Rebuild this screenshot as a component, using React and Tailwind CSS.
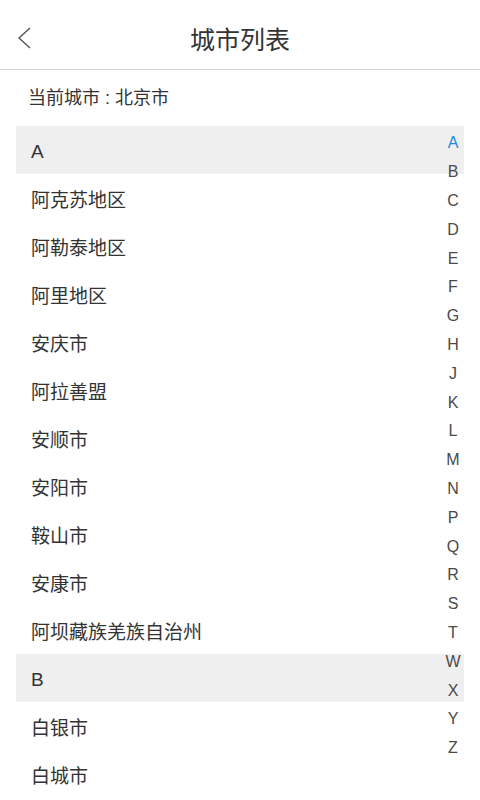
import React from "react";

const sections = [
  {
    letter: "A",
    cities: ["阿克苏地区", "阿勒泰地区", "阿里地区", "安庆市", "阿拉善盟", "安顺市", "安阳市", "鞍山市", "安康市", "阿坝藏族羌族自治州"],
  },
  { letter: "B", cities: ["白银市", "白城市"] },
];

const index = ["A", "B", "C", "D", "E", "F", "G", "H", "J", "K", "L", "M", "N", "P", "Q", "R", "S", "T", "W", "X", "Y", "Z"];

export default function App() {
  return (
    <div
      className="relative w-[480px] h-[800px] overflow-hidden bg-white text-[#333]"
      style={{ fontFamily: '"Liberation Sans", "Noto Sans CJK SC", sans-serif' }}
    >
      <div className="relative h-[70px] flex items-center justify-center pt-[12px] border-b border-[#d4d4d4]">
        <svg className="absolute left-[17px] top-[27px]" width="14" height="22" viewBox="0 0 14 22">
          <path d="M13 1 L2 11 L13 21" fill="none" stroke="#555" strokeWidth="1.4" strokeLinejoin="miter" />
        </svg>
        <span className="text-[25px] text-[#333] leading-none">城市列表</span>
      </div>
      <div className="h-[56px] flex items-center pl-[28px] text-[18px]">当前城市 : 北京市</div>
      <div className="mx-[16px]">
        {sections.map((s) => (
          <div key={s.letter}>
            <div className="h-[48px] bg-[#efefef] flex items-center pl-[15px] pt-[4px] text-[19px]">{s.letter}</div>
            {s.cities.map((c) => (
              <div key={c} className="h-[48px] flex items-center pl-[15px] pt-[6px] text-[19px]">
                {c}
              </div>
            ))}
          </div>
        ))}
      </div>
      <div className="absolute left-[443px] top-[129px] w-[20px] flex flex-col items-center">
        {index.map((l) => (
          <div
            key={l}
            className={`h-[28.8px] flex items-center justify-center text-[16px] ${l === "A" ? "text-[#1e88e5]" : "text-[#4a4a4a]"}`}
          >
            {l}
          </div>
        ))}
      </div>
    </div>
  );
}
